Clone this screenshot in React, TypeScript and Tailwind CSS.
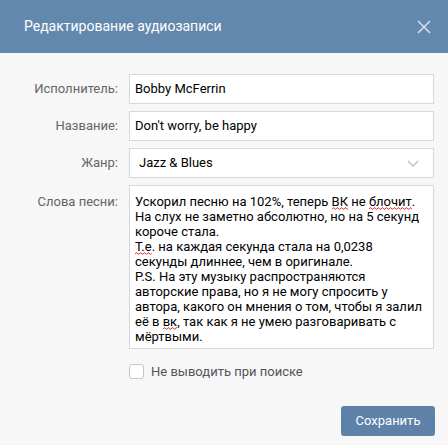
import React, { useId } from "react";

// ── Helpers ───────────────────────────────────────────────────────────────────

const LABEL = "w-[118px] shrink-0 text-right text-[13px] text-[#656565]";
const FIELD = "h-[30px] w-[305px] border border-[#d3d9de] bg-white text-[13px] text-black flex items-center";

// spell-check squiggle under a word
function Wavy({ children }: { children: React.ReactNode }) {
  const id = useId().replace(/:/g, "");
  return (
    <span className="relative">
      {children}
      <svg className="absolute left-0 top-[13px] w-full h-[3px]">
        <defs>
          <pattern id={id} width="4" height="3" patternUnits="userSpaceOnUse">
            <path d="M0 2.2 L1 0.8 L2 0.8 L3 2.2 L4 2.2" fill="none" stroke="#e0302e" strokeWidth="0.9" />
          </pattern>
        </defs>
        <rect width="100%" height="3" fill={`url(#${id})`} />
      </svg>
    </span>
  );
}

function Row({ label, children }: { label: string; children: React.ReactNode }) {
  return (
    <div className="flex items-center">
      <div className={LABEL}>{label}</div>
      <div className="ml-[11px]">{children}</div>
    </div>
  );
}

// ── Main component ────────────────────────────────────────────────────────────

export default function App() {
  return (
    <div
      className="w-[448px] h-[445px] bg-[#f7f7f7] overflow-hidden"
      style={{ fontFamily: "Roboto, 'Noto Sans', sans-serif" }}
    >
      {/* Header */}
      <div className="h-[53px] bg-[#6288ae] flex items-center justify-between pl-[24px] pr-[17px]">
        <span className="text-[14px] text-white">Редактирование аудиозаписи</span>
        <svg width="14" height="14" viewBox="0 0 14 14" className="mt-[1px]">
          <path d="M1 1 L13 13 M13 1 L1 13" stroke="#d3dde8" strokeWidth="1.6" />
        </svg>
      </div>

      {/* Form */}
      <div className="pt-[21px] flex flex-col gap-[7px]">
        <Row label="Исполнитель:">
          <div className={`${FIELD} pl-[5px]`}>Bobby McFerrin</div>
        </Row>
        <Row label="Название:">
          <div className={`${FIELD} pl-[5px]`}>Don't worry, be happy</div>
        </Row>
        <Row label="Жанр:">
          <div className={`${FIELD} pl-[9px] pr-[14px] justify-between`}>
            <span>Jazz &amp; Blues</span>
            <svg width="12" height="7" viewBox="0 0 12 7">
              <path d="M1 1 L6 6 L11 1" fill="none" stroke="#b8bec5" strokeWidth="1.3" />
            </svg>
          </div>
        </Row>

        <div className="flex items-start">
          <div className={`${LABEL} pt-[9px] leading-[15px]`}>Слова песни:</div>
          <div className="ml-[11px] w-[305px] h-[164px] border border-[#d3d9de] bg-white pl-[5px] pt-[8px] text-[13px] leading-[15px] text-black">
            <div>Ускорил песню на 102%, теперь <Wavy>ВК</Wavy> не <Wavy>блочит</Wavy>.</div>
            <div>На слух не заметно абсолютно, но на 5 секунд</div>
            <div>короче стала.</div>
            <div><Wavy>Т.е</Wavy>. на каждая секунда стала на 0,0238</div>
            <div>секунды длиннее, чем в оригинале.</div>
            <div>P.S. На эту музыку распространяются</div>
            <div>авторские права, но я не могу спросить у</div>
            <div>автора, какого он мнения о том, чтобы я залил</div>
            <div>её в <Wavy>вк</Wavy>, так как я не умею разговаривать с</div>
            <div>мёртвыми.</div>
          </div>
        </div>
      </div>

      {/* Checkbox */}
      <div className="mt-[13px] ml-[129px] flex items-center gap-[7px]">
        <div className="w-[15px] h-[15px] rounded-[3px] border border-[#c1c9d1] bg-white" />
        <span className="text-[13px] text-[#555]">Не выводить при поиске</span>
      </div>

      {/* Footer */}
      <div className="mt-[24px] flex justify-end pr-[13px]">
        <button className="h-[30px] w-[94px] rounded-[3px] bg-[#5e81a8] text-[13px] text-white">
          Сохранить
        </button>
      </div>
    </div>
  );
}
